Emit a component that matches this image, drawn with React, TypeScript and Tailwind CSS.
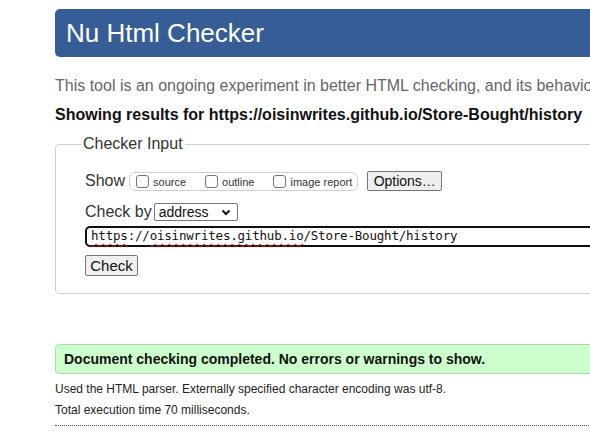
import React from 'react';

const Box: React.FC = () => (
  <span className="inline-block w-[13px] h-[13px] border border-[#767676] rounded-[3px] bg-white mr-[4px]" />
);

const Squiggle: React.FC<{ children: React.ReactNode }> = ({ children }) => (
  <span className="underline decoration-wavy decoration-[#e0201b] decoration-1 underline-offset-[3px]">{children}</span>
);

const App: React.FC = () => {
  return (
    <div className="w-[590px] h-[446px] overflow-hidden bg-white font-['Liberation_Sans',Arial,sans-serif] text-[#222]">
      <div className="w-[700px] pl-[55px] pt-[9px]">
        <h1 className="h-[48px] bg-[#365d96] rounded-[5px] pl-[11px] flex items-center text-white text-[26px] leading-none">
          Nu Html Checker
        </h1>

        <p className="mt-[19px] text-[16px] text-[#666] leading-[20px] whitespace-nowrap">
          This tool is an ongoing experiment in better HTML checking, and its behavior remains subject to change
        </p>
        <p className="mt-[9px] text-[16px] font-bold text-[#111] leading-[20px] whitespace-nowrap">
          Showing results for https://oisinwrites.github.io/Store-Bought/history
        </p>

        <fieldset className="mt-[10px] border border-[#cfcfcf] rounded-[4px] pl-[29px] pb-[15px] pt-[10px] w-[640px]">
          <legend className="-ml-[4px] px-[2px] text-[16px] text-[#333] leading-[18px]">Checker Input</legend>

          <div className="flex items-center h-[22px] mt-[7px]">
            <span className="text-[16px] text-[#333] mr-[4px]">Show</span>
            <div className="flex items-center h-[19px] border border-[#cfcfcf] rounded-[6px] pl-[6px] pr-[5px] text-[11px] text-[#333]">
              <label className="flex items-center">
                <Box />
                <span className="mt-[3px]">source</span>
              </label>
              <label className="flex items-center ml-[19px]">
                <Box />
                <span className="mt-[3px]">outline</span>
              </label>
              <label className="flex items-center ml-[19px]">
                <Box />
                <span className="mt-[3px]">image report</span>
              </label>
            </div>
            <button className="ml-[9px] h-[20px] w-[75px] border border-[#767676] rounded-[2px] bg-[#efefef] text-[14px] text-[#111] leading-none">
              Options…
            </button>
          </div>

          <div className="flex items-center mt-[10px] h-[20px]">
            <span className="text-[16px] text-[#333] mr-[2px]">Check by</span>
            <div className="w-[84px] h-[18px] border border-[#767676] rounded-[2px] bg-white flex items-center justify-between pl-[4px] pr-[6px] text-[14px] text-[#111]">
              <span className="leading-none">address</span>
              <svg width="10" height="7" viewBox="0 0 10 7">
                <path d="M1.5 1.5 L5 5 L8.5 1.5" fill="none" stroke="#111" strokeWidth="2" />
              </svg>
            </div>
          </div>

          <div className="mt-[4px] h-[21px] w-[560px] border-2 border-[#101010] rounded-[5px] flex items-center pl-[4px] font-['DejaVu_Sans_Mono',monospace] text-[12.5px] text-[#111] whitespace-nowrap tracking-[-0.2px]">
            <Squiggle>https</Squiggle>://<Squiggle>oisinwrites.github.io</Squiggle>/Store-Bought/history
          </div>

          <button className="mt-[8px] h-[21px] w-[53px] border border-[#767676] rounded-[2px] bg-[#efefef] text-[15px] text-[#111] leading-none">
            Check
          </button>
        </fieldset>

        <div className="mt-[50px] h-[30px] w-[640px] bg-[#ccffcc] border border-[#aaddaa] rounded-[4px] flex items-center pl-[8px] text-[14px] font-bold text-[#111]">
          Document checking completed. No errors or warnings to show.
        </div>

        <p className="mt-[7px] text-[12px] text-[#222] leading-[16px]">
          Used the HTML parser. Externally specified character encoding was utf-8.
        </p>
        <p className="mt-[5px] text-[12px] text-[#222] leading-[16px]">Total execution time 70 milliseconds.</p>
        <div className="mt-[7px] border-t border-dotted border-[#555] w-[640px]" />
      </div>
    </div>
  );
};

export default App;
